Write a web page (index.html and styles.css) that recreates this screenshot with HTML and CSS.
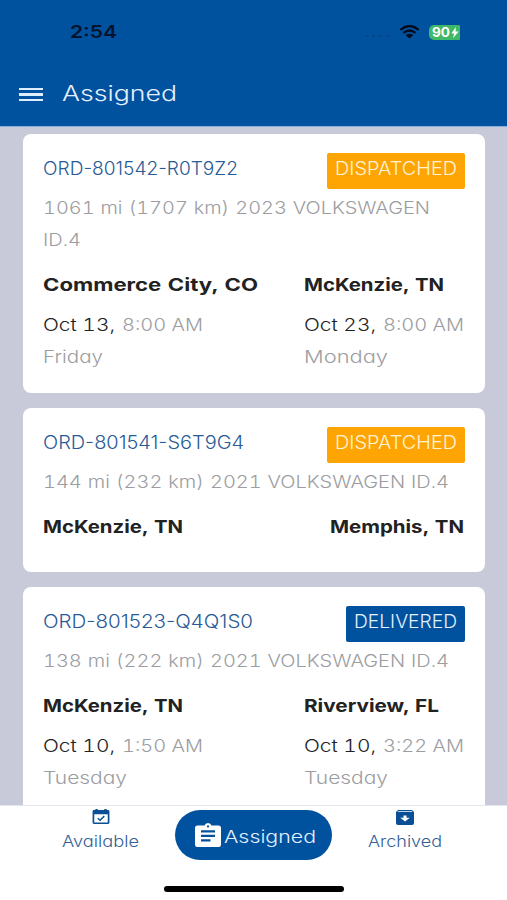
FILE: index.html
```html
<!DOCTYPE html>
<html lang="en">
<head>
<meta charset="utf-8">
<title>Assigned</title>
<link rel="stylesheet" href="styles.css">
</head>
<body>
<div class="phone">
  <header class="header">
    <div class="status">
      <span class="clock" data-w="47">2:54</span>
      <div class="indicators">
        <span class="dots"><i></i><i></i><i></i><i></i></span>
        <svg class="wifi" viewBox="0 0 22 15"><path d="M1.2 5.2Q11-3 20.8 5.2" /><path d="M4.6 8.5Q11 3.4 17.4 8.5"/><path class="solid" d="M7 10.9Q11 7.8 15 10.9L11 14.5Z"/></svg>
        <span class="battery"><span class="level" data-w="18">90</span><svg class="bolt" viewBox="0 0 8 12"><path d="M5 0 0 7h3L2 12l6-7H4.6Z"/></svg></span>
      </div>
    </div>
    <div class="titlebar">
      <span class="burger"><i></i><i></i><i></i></span>
      <h1 class="title" data-w="115">Assigned</h1>
    </div>
  </header>

  <main class="list">
    <article class="card">
      <div class="head"><span class="order" data-w="195">ORD-801542-R0T9Z2</span><span class="badge"><span data-w="122">DISPATCHED</span></span></div>
      <div class="meta"><span data-w="387">1061 mi (1707 km) 2023 VOLKSWAGEN</span></div>
      <div class="meta"><span data-w="38">ID.4</span></div>
      <div class="route">
        <div class="stop">
          <div class="city"><span data-w="215">Commerce City, CO</span></div>
          <div class="date"><span data-w="72">Oct 13,</span><span class="time" data-w="81">8:00 AM</span></div>
          <div class="day"><span data-w="60">Friday</span></div>
        </div>
        <div class="stop end">
          <div class="city"><span data-w="140">McKenzie, TN</span></div>
          <div class="date"><span data-w="72">Oct 23,</span><span class="time" data-w="81">8:00 AM</span></div>
          <div class="day"><span data-w="84">Monday</span></div>
        </div>
      </div>
    </article>

    <article class="card">
      <div class="head"><span class="order" data-w="201">ORD-801541-S6T9G4</span><span class="badge"><span data-w="122">DISPATCHED</span></span></div>
      <div class="meta"><span data-w="406">144 mi (232 km) 2021 VOLKSWAGEN ID.4</span></div>
      <div class="route undated">
        <div class="stop"><div class="city"><span data-w="140">McKenzie, TN</span></div></div>
        <div class="stop"><div class="city"><span data-w="134">Memphis, TN</span></div></div>
      </div>
    </article>

    <article class="card">
      <div class="head"><span class="order" data-w="210">ORD-801523-Q4Q1S0</span><span class="badge delivered"><span data-w="103">DELIVERED</span></span></div>
      <div class="meta"><span data-w="406">138 mi (222 km) 2021 VOLKSWAGEN ID.4</span></div>
      <div class="route">
        <div class="stop">
          <div class="city"><span data-w="140">McKenzie, TN</span></div>
          <div class="date"><span data-w="72">Oct 10,</span><span class="time" data-w="81">1:50 AM</span></div>
          <div class="day"><span data-w="84">Tuesday</span></div>
        </div>
        <div class="stop end">
          <div class="city"><span data-w="135">Riverview, FL</span></div>
          <div class="date"><span data-w="72">Oct 10,</span><span class="time" data-w="81">3:22 AM</span></div>
          <div class="day"><span data-w="84">Tuesday</span></div>
        </div>
      </div>
    </article>
  </main>

  <nav class="tabs">
    <div class="tab">
      <svg class="calendar" viewBox="0 0 18 16"><path fill-rule="evenodd" d="M3 0h2.5v1h7V0H15v1h1.5Q18 1 18 2.5v12Q18 16 16.500 16h-15Q0 16 0 14.500v-12Q0 1 1.500 1H3ZM1.800 5.500v8.900h14.400V5.500Z"/><path class="tick" d="M5.500 9.800 8 12l4.500-4.400"/></svg>
      <span class="label"><span data-w="77">Available</span></span>
    </div>
    <div class="tab active">
      <svg class="clipboard" viewBox="0 0 26 24"><path fill-rule="evenodd" d="M2.500 2.500h7Q10.300 0 13 0t3.500 2.500h7Q26 2.500 26 5v16.500Q26 24 23.500 24h-21Q0 24 0 21.500V5Q0 2.500 2.500 2.500ZM13 2.300a1.100 1.100 0 1 0 .01 0ZM6 7.300v2.100h14V7.300Zm0 4.500v2.100h14v-2.100Zm0 4.500v2.100h9.500v-2.100Z"/></svg>
      <span class="label"><span data-w="92">Assigned</span></span>
    </div>
    <div class="tab">
      <svg class="archive" viewBox="0 0 18 15"><path fill-rule="evenodd" d="M2 0h14l2 2v11.200Q18 15 16 15H2Q0 15 0 13.200V2ZM2 1.300l-.6.600h15.200l-.6-.6ZM7.500 5.500v2.200H4.200L9 11.500l4.800-3.800h-3.300V5.500Z"/></svg>
      <span class="label"><span data-w="74">Archived</span></span>
    </div>
  </nav>
  <div class="home"><i></i></div>
</div>
<script src="fit.js"></script>
</body>
</html>
```
FILE: styles.css
```css
* { box-sizing: border-box; }
body { margin: 0; font-family: Inter, "Liberation Sans", sans-serif; font-feature-settings: "cv11"; font-weight: 300; font-size: 17.500px; line-height: 32px; color: #222; }
i { display: block; }
svg { display: block; flex: none; }
[data-w] { display: inline-block; white-space: nowrap; transform-origin: left center; }

.phone { width: 507px; height: 900px; display: flex; flex-direction: column; overflow: hidden; background: #fff; }

.header { flex: none; height: 127px; background: #00529e; border-bottom: 1px solid #86afe0; }
.status { height: 64px; padding: 0 47px 0 70px; display: flex; align-items: center; justify-content: space-between; }
.clock { font-size: 17.500px; font-weight: 600; color: #04142e; }
.indicators { display: flex; align-items: center; }
.dots { display: flex; gap: 4px; margin: 7px 10px 0 0; }
.dots i { width: 3px; height: 2px; border-radius: 1px; background: #084482; }
.wifi { width: 21px; height: 14px; margin-right: 9px; fill: none; stroke: #020d22; stroke-width: 2.500; }
.wifi .solid { fill: #020d22; stroke: none; }
.battery { width: 31px; height: 15px; padding-left: 3px; border-radius: 5px 1px 1px 5px; background: #3fb868; color: #fff; display: flex; align-items: center; }
.level { font-size: 13px; font-weight: 700; line-height: 15px; }
.bolt { width: 8px; height: 11px; margin-left: 1px; fill: #fff; }
.titlebar { height: 62px; padding: 0 19px 3px; display: flex; align-items: center; }
.burger { display: flex; flex-direction: column; gap: 3px; width: 24px; margin: 2px 19px 0 0; }
.burger i { height: 2.500px; background: #dceeff; }
.title { margin: 0; font-size: 21px; font-weight: 300; color: #e4f1ff; }

.list { flex: 1; min-height: 0; padding: 7px 22px 0 23px; display: flex; flex-direction: column; gap: 15px; overflow: hidden; background: #c8cad9; }
.card { flex: none; padding: 19px 21px 20px 20px; border-radius: 8px; background: #fff; }
.head { height: 39px; display: flex; justify-content: space-between; align-items: flex-start; }
.order { color: #285a96; font-size: 18px; }
.badge { height: 36px; margin-right: -1px; padding: 0 8px; border-radius: 2px; background: #ffa503; color: #fff3d6; font-size: 18px; }
.badge.delivered { background: #00529e; color: #e4f1ff; }
.meta, .day, .time { color: #9c9da2; }
.meta, .date, .day { height: 32px; }
.meta { word-spacing: 0.500px; font-feature-settings: "cv11", "tnum"; }
.date { font-feature-settings: "cv11", "tnum"; }
.route { display: flex; justify-content: space-between; padding-top: 13px; }
.route.undated { padding-bottom: 9px; }
.stop.end { width: 160px; }
.city { height: 40px; font-weight: 700; word-spacing: 1px; }
.undated .city { height: 32px; }
.date { display: flex; gap: 7px; }

.tabs { flex: none; height: 64px; border-top: 1px solid #e4e6ee; display: flex; align-items: flex-start; justify-content: space-between; padding: 4px 65px 0 62px; }
.tab { display: flex; flex-direction: column; align-items: center; color: #345f98; font-size: 15.500px; }
.tab .label { line-height: 32px; height: 32px; margin-top: 1px; }
.calendar, .archive { width: 18px; height: 15px; fill: #0a4f96; }
.calendar { margin-top: -1px; margin-bottom: 1px; }
.calendar .tick { fill: none; stroke: #0a4f96; stroke-width: 1.500; }
.tab.active { flex-direction: row; width: 157px; height: 50px; padding-left: 20px; gap: 3px; border-radius: 25px; background: #00529e; color: #e4f1ff; font-size: 17.500px; }
.tab.active .label { margin-top: 4px; }
.clipboard { width: 26px; height: 24px; fill: #fff; }
.home { flex: none; height: 31px; display: flex; justify-content: center; padding: 17px 0 0 1px; }
.home i { width: 180px; height: 6px; border-radius: 3px; background: #000; }
```
FILE: fit.js
```js
// Stretch each label horizontally to its design width, keeping the flow in step.
document.querySelectorAll("[data-w]").forEach(function (el) {
  var range = document.createRange();
  range.selectNodeContents(el);
  var natural = range.getBoundingClientRect().width;
  var target = Number(el.dataset.w);
  el.style.transform = "scaleX(" + target / natural + ")";
  el.style.width = natural + "px";
  el.style.flex = "none";
  el.style.marginRight = target - natural + "px";
});
```
